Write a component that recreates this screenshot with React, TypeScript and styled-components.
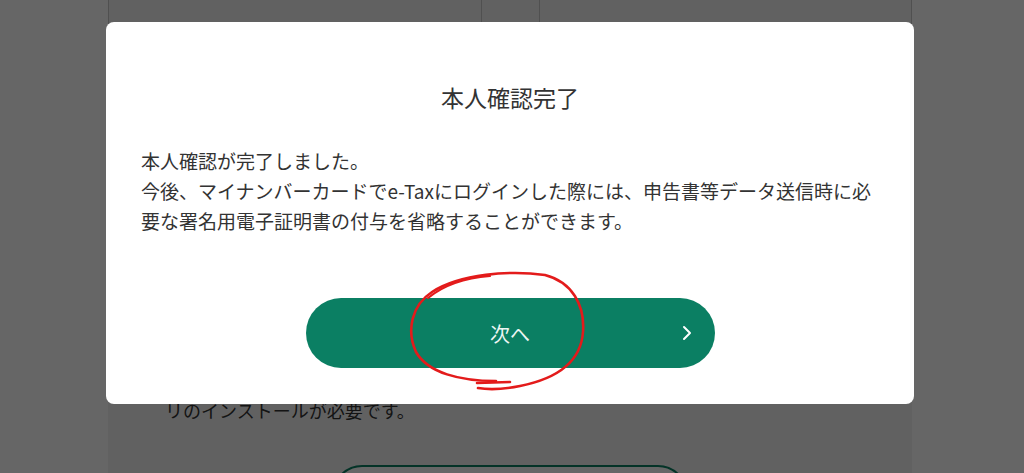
import React from "react";
import styled, { createGlobalStyle } from "styled-components";

const GlobalStyle = createGlobalStyle`
  html, body {
    margin: 0;
    padding: 0;
    background: #ffffff;
    font-family: "Noto Sans CJK JP", "Noto Sans", sans-serif;
    overflow: hidden;
  }
`;

// Page under the overlay
const Page = styled.div`
  height: 473px;
  overflow: hidden;
`;

const Panel = styled.div`
  margin-left: 108px;
  width: 804px;
  background: #f3f3f3;
  min-height: 473px;
  display: flex;
  flex-direction: column;
`;

const Table = styled.div`
  display: grid;
  grid-template-columns: 373px 58px 373px;
  height: 380px;
`;

const Cell = styled.div`
  border-left: 1px solid #c8c8c8;
  &:last-child {
    border-right: 1px solid #c8c8c8;
  }
`;

const Note = styled.p`
  margin: 15px 0 0;
  padding-left: 57px;
  font-size: 18px;
  line-height: 30px;
  color: #333;
`;

const OutlineButton = styled.button`
  align-self: center;
  margin-top: 40px;
  width: 356px;
  height: 60px;
  border: 2px solid #0b7f63;
  border-radius: 30px;
  background: #fff;
`;

// Modal layer
const Overlay = styled.div`
  position: fixed;
  inset: 0;
  background: rgba(0, 0, 0, 0.6);
  display: flex;
  justify-content: center;
  align-items: flex-start;
`;

const Modal = styled.div`
  margin-top: 22px;
  margin-left: -4px;
  width: 808px;
  height: 382px;
  box-sizing: border-box;
  background: #fff;
  border-radius: 8px;
  padding: 58px 35px 36px;
  display: flex;
  flex-direction: column;
`;

const Title = styled.h2`
  margin: 0;
  text-align: center;
  font-size: 23px;
  font-weight: 400;
  line-height: 34px;
  color: #333;
`;

const Body = styled.p`
  margin: 32px 0 0;
  font-size: 19px;
  line-height: 30px;
  color: #333;
`;

const NextButton = styled.button`
  position: relative;
  align-self: center;
  margin-top: auto;
  width: 409px;
  height: 70px;
  border: none;
  border-radius: 35px;
  background: #0b7f63;
  color: #eef6f3;
  font-family: inherit;
  font-size: 20px;
  cursor: pointer;
  display: flex;
  align-items: center;
  justify-content: center;
`;

const Chevron = styled.svg`
  position: absolute;
  right: 23px;
  top: 50%;
  transform: translateY(-50%);
`;

const Scribble = styled.svg`
  position: absolute;
  inset: 0;
  pointer-events: none;
`;

export default function App() {
  return (
    <>
      <GlobalStyle />
      <Page>
        <Panel>
          <Table>
            <Cell />
            <Cell />
            <Cell />
          </Table>
          <Note>リのインストールが必要です。</Note>
          <OutlineButton />
        </Panel>
      </Page>
      <Overlay>
        <Modal>
          <Title>本人確認完了</Title>
          <Body>
            本人確認が完了しました。
            <br />
            今後、マイナンバーカードでe-Taxにログインした際には、申告書等データ送信時に必要な署名用電子証明書の付与を省略することができます。
          </Body>
          <NextButton>
            次へ
            <Chevron width="10" height="16" viewBox="0 0 10 16">
              <path d="M2 2 L8 8 L2 14" fill="none" stroke="#fff" strokeWidth="2" strokeLinecap="round" strokeLinejoin="round" />
            </Chevron>
          </NextButton>
        </Modal>
        <Scribble width="1024" height="473" viewBox="0 0 1024 473">
          <path
            d="M496 381 C460 381 428 373 416 352 C406 330 412 305 432 292 C460 274 510 270 545 275 C572 282 585 305 583 332 C581 360 560 378 520 386 C505 389 490 390 478 388"
            fill="none"
            stroke="#e31b1b"
            strokeWidth="2.6"
            strokeLinecap="round"
          />
          <path d="M428 298 C445 284 465 278 490 276" fill="none" stroke="#e31b1b" strokeWidth="2.2" strokeLinecap="round" />
          <path d="M477 383 L510 382" fill="none" stroke="#e31b1b" strokeWidth="2.6" strokeLinecap="round" />
        </Scribble>
      </Overlay>
    </>
  );
}
